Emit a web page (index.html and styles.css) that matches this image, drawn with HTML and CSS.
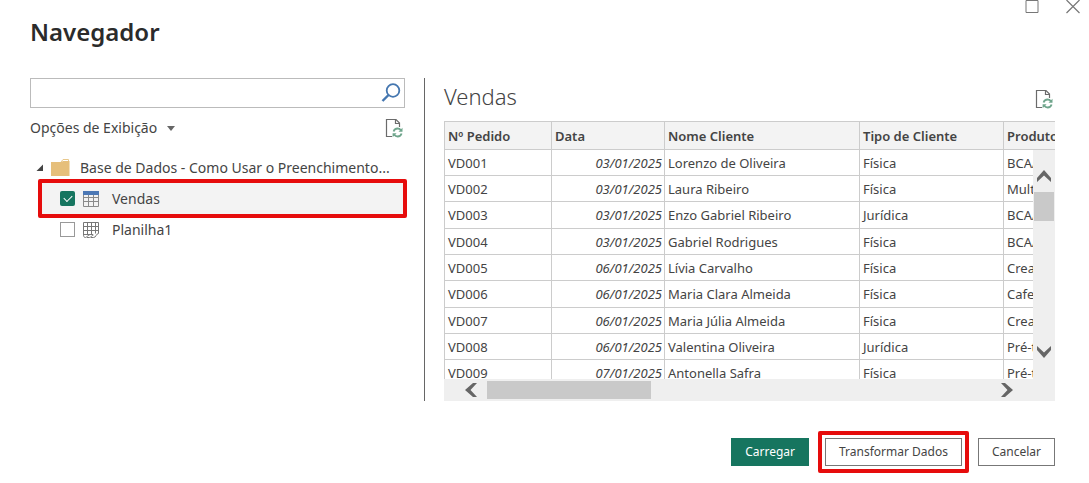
FILE: index.html
```
<!DOCTYPE html>
<html lang="pt-BR">
<head>
    <meta charset="UTF-8">
    <meta name="viewport" content="width=device-width, initial-scale=1.0">
    <title>Navegador</title>
    <link rel="stylesheet" href="styles.css">
</head>
<body>
    <!-- Shared icons -->
    <svg class="sprite" aria-hidden="true">
        <symbol id="icon-refresh" viewBox="0 0 18 20">
            <path d="M7 18.500H1.500V1.500H11L14.500 5v4" fill="none" stroke="#6b6b6b" stroke-width="1.200"/>
            <path d="M10.500 1.500V5.500h4" fill="none" stroke="#6b6b6b" stroke-width="1.200"/>
            <path d="M8.600 13.500c.6-2 2.200-3 4-3 1.500 0 2.600.7 3.300 1.700M16.600 15.500c-.6 2-2.200 3-4 3-1.500 0-2.600-.7-3.300-1.700" fill="none" stroke="#6fa58c" stroke-width="1.800"/>
            <path d="M17.500 9.800v4h-4zM7.600 19.200v-4h4z" fill="#6fa58c"/>
        </symbol>
    </svg>

    <main class="dialog">
        <!-- Window buttons -->
        <div class="titlebar">
            <button class="window-button" type="button" aria-label="Maximizar">
                <svg width="14" height="14" viewBox="0 0 14 14"><path d="M1 .5h12v12H1z" fill="none" stroke="#777"/></svg>
            </button>
            <button class="window-button" type="button" aria-label="Fechar">
                <svg width="14" height="14" viewBox="0 0 14 14"><path d="M.5 0l13 13M13.500 0l-13 13" fill="none" stroke="#777" stroke-width="1.200"/></svg>
            </button>
        </div>

        <h1 class="title">Navegador</h1>

        <div class="content">
            <!-- Source tree -->
            <section class="sources">
                <div class="search">
                    <input type="text" aria-label="Pesquisar">
                    <button type="button" aria-label="Buscar">
                        <svg width="20" height="20" viewBox="0 0 20 20"><circle cx="12" cy="7.500" r="6.300" fill="none" stroke="#4577b0" stroke-width="1.800"/><path d="M7.500 12L1.500 18" stroke="#4577b0" stroke-width="2.400"/></svg>
                    </button>
                </div>
                <div class="options">
                    <button class="options-button" type="button">Opções de Exibição <span class="caret"></span></button>
                    <button class="refresh" type="button" aria-label="Atualizar"><svg width="18" height="20"><use href="#icon-refresh"/></svg></button>
                </div>
                <ul class="tree">
                    <li class="folder">
                        <svg class="expander" width="8" height="8" viewBox="0 0 8 8"><path d="M7 .5V7H.5z" fill="#444"/></svg>
                        <svg class="icon" width="19" height="18" viewBox="0 0 19 18"><path d="M10 3l2-2.500h5.500V3" fill="#fff" stroke="#e8c88c"/><path d="M0 3h10.500l1.500-1h6.500v15H0z" fill="#e6bf7b"/></svg>
                        <span class="folder-name">Base de Dados - Como Usar o Preenchimento...</span>
                    </li>
                    <li class="item selected highlight">
                        <input type="checkbox" id="vendas" checked>
                        <svg class="icon" width="18" height="16" viewBox="0 0 18 16"><path d="M1.500 1v14.500h15V1M1.500 6.500h15M1.500 10.500h15M6.500 4v11.500M11.500 4v11.500" fill="none" stroke="#8a8a8a"/><path d="M1 0h16v4H1z" fill="#4c78b5"/></svg>
                        <label for="vendas">Vendas</label>
                    </li>
                    <li class="item">
                        <input type="checkbox" id="planilha1">
                        <svg class="icon" width="18" height="16" viewBox="0 0 18 16"><path d="M1.500 12.500V.5h15v11M1 4.500h16M1 8.500h16M1 12.500h10M5.500.5v12M9.500.5v12M13.500.5v11" fill="none" stroke="#777"/><path d="M1.500 12.500c0 2 .5 3 2 3 2 0 1.500-2.500 4-2.500M5 15.500h2.500c2 0 2-2.500 4-2.500M9 15.500h2.500c3 0 2-3.500 5-4" fill="none" stroke="#777"/></svg>
                        <label for="planilha1">Planilha1</label>
                    </li>
                </ul>
            </section>

            <!-- Table preview -->
            <section class="preview">
                <div class="preview-head">
                    <h2>Vendas</h2>
                    <button class="refresh" type="button" aria-label="Atualizar visualização"><svg width="18" height="20"><use href="#icon-refresh"/></svg></button>
                </div>
                <div class="grid">
                    <div class="grid-view">
                        <table>
                            <colgroup>
                                <col class="col-order"><col class="col-date"><col class="col-name"><col class="col-type"><col class="col-product">
                            </colgroup>
                            <thead>
                                <tr><th>Nº Pedido</th><th>Data</th><th>Nome Cliente</th><th>Tipo de Cliente</th><th>Produto</th></tr>
                            </thead>
                            <tbody>
                                <tr><td>VD001</td><td class="date">03/01/2025</td><td>Lorenzo de Oliveira</td><td>Física</td><td>BCAA</td></tr>
                                <tr><td>VD002</td><td class="date">03/01/2025</td><td>Laura Ribeiro</td><td>Física</td><td>Multi</td></tr>
                                <tr><td>VD003</td><td class="date">03/01/2025</td><td>Enzo Gabriel Ribeiro</td><td>Jurídica</td><td>BCAA</td></tr>
                                <tr><td>VD004</td><td class="date">03/01/2025</td><td>Gabriel Rodrigues</td><td>Física</td><td>BCAA</td></tr>
                                <tr><td>VD005</td><td class="date">06/01/2025</td><td>Lívia Carvalho</td><td>Física</td><td>Crea</td></tr>
                                <tr><td>VD006</td><td class="date">06/01/2025</td><td>Maria Clara Almeida</td><td>Física</td><td>Cafe</td></tr>
                                <tr><td>VD007</td><td class="date">06/01/2025</td><td>Maria Júlia Almeida</td><td>Física</td><td>Crea</td></tr>
                                <tr><td>VD008</td><td class="date">06/01/2025</td><td>Valentina Oliveira</td><td>Jurídica</td><td>Pré-t</td></tr>
                                <tr><td>VD009</td><td class="date">07/01/2025</td><td>Antonella Safra</td><td>Física</td><td>Pré-t</td></tr>
                            </tbody>
                        </table>
                        <div class="scroll-vertical">
                            <svg width="16" height="12" viewBox="0 0 16 12"><path d="M8 0l7 8v4L8 5.500 1 12V8z" fill="#666"/></svg>
                            <div class="track"><div class="thumb"></div></div>
                            <svg width="16" height="12" viewBox="0 0 16 12"><path d="M8 12l7-8V0L8 6.500 1 0v4z" fill="#666"/></svg>
                        </div>
                    </div>
                    <div class="scroll-horizontal">
                        <svg width="12" height="16" viewBox="0 0 12 16"><path d="M0 8l8-7h4L5.500 8l6.500 7H8z" fill="#666"/></svg>
                        <div class="track"><div class="thumb"></div></div>
                        <svg width="12" height="16" viewBox="0 0 12 16"><path d="M12 8L4 1H0l6.500 7L0 15h4z" fill="#666"/></svg>
                    </div>
                </div>
            </section>
        </div>

        <div class="actions">
            <button class="button primary" type="button">Carregar</button>
            <button class="button highlight" type="button">Transformar Dados</button>
            <button class="button" type="button">Cancelar</button>
        </div>
    </main>
</body>
</html>
```
FILE: styles.css
```
* {
    margin: 0;
    padding: 0;
    box-sizing: border-box;
}

body {
    background: #fff;
    color: #444;
    font-family: "Noto Sans", "Open Sans", sans-serif;
    font-size: 14px;
    line-height: 20px;
}

button {
    background: none;
    border: none;
    color: inherit;
    font: inherit;
    cursor: pointer;
}

svg {
    display: block;
    flex: none;
}

.sprite {
    position: absolute;
    width: 0;
    height: 0;
}

.dialog {
    padding: 0 34px 16px 30px;
}

/* Window buttons */
.titlebar {
    display: flex;
    justify-content: flex-end;
    gap: 27px;
    margin-right: -25px;
}

.title {
    color: #2b2b2b;
    font-size: 24px;
    font-weight: 600;
    line-height: 36px;
}

.content {
    display: grid;
    grid-template-columns: 375px minmax(0, 1fr);
    gap: 19px;
    margin-top: 28px;
}

/* Left side */
.search {
    display: flex;
    height: 30px;
    border: 1px solid #bbb;
}

.search input {
    flex: 1;
    min-width: 0;
    padding: 0 8px;
    border: none;
    outline: none;
    font: inherit;
}

.search button {
    padding: 4px 3px;
}

.options {
    display: flex;
    justify-content: space-between;
    align-items: center;
    height: 40px;
}

.options-button {
    display: flex;
    align-items: center;
    gap: 10px;
}

.refresh {
    padding-right: 2px;
}

.caret {
    border: 4px solid transparent;
    border-top: 5px solid #666;
    border-bottom: none;
}

.tree {
    margin-top: 4px;
    list-style: none;
}

.tree li {
    display: flex;
    align-items: center;
    height: 31px;
}

.folder {
    padding-left: 6px;
}

.folder .icon {
    margin: 0 10px 0 7px;
}

.folder-name {
    white-space: nowrap;
}

.item {
    position: relative;
    margin: 0 2px 0 12px;
    padding-left: 18px;
}

.item .icon {
    margin: 0 12px 0 7px;
}

.selected {
    background: #f3f3f3;
}

.item input {
    appearance: none;
    width: 15px;
    height: 15px;
    border: 1px solid #999;
}

.item input:checked {
    border: none;
    border-radius: 2px;
    background: #16755f;
}

.item input:checked::after {
    content: "";
    display: block;
    width: 7px;
    height: 4px;
    margin: 4px;
    border-left: 1px solid #fff;
    border-bottom: 1px solid #fff;
    transform: rotate(-45deg);
}

/* Red frame around the important steps */
.highlight {
    position: relative;
}

.highlight::after {
    content: "";
    position: absolute;
    inset: -4px;
    border: 4px solid #e60c0c;
    border-radius: 2px;
    pointer-events: none;
}

/* Right side */
.preview {
    padding-left: 19px;
    border-left: 1px solid #666;
}

.preview-head {
    display: flex;
    justify-content: space-between;
    align-items: flex-start;
    height: 43px;
}

.preview-head h2 {
    font-size: 22px;
    font-weight: 300;
    line-height: 36px;
}

.preview-head .refresh {
    padding-top: 11px;
}

.grid-view {
    position: relative;
    height: 258px;
    overflow: hidden;
}

table {
    width: 709px;
    border-collapse: collapse;
    table-layout: fixed;
    font-size: 13px;
    line-height: 18px;
}

.col-order {
    width: 107px;
}

.col-date {
    width: 113px;
}

.col-name {
    width: 195px;
}

.col-type {
    width: 144px;
}

th,
td {
    height: 26px;
    padding: 0 3px;
    border: 1px solid #ccc;
    text-align: left;
    white-space: nowrap;
}

th {
    height: 28px;
    background: #f3f3f3;
    font-weight: 600;
}

tr:nth-child(3n) td {
    height: 27px;
}

.date {
    padding-right: 2px;
    font-style: italic;
    text-align: right;
}

.scroll-vertical {
    position: absolute;
    top: 29px;
    right: 0;
    bottom: 0;
    display: flex;
    flex-direction: column;
    align-items: center;
    width: 22px;
    padding: 20px 0 21px;
    background: #efefef;
}

.scroll-vertical .track {
    flex: 1;
    padding-top: 10px;
}

.scroll-vertical .thumb {
    width: 20px;
    height: 29px;
    background: #c9c9c9;
}

.scroll-horizontal {
    display: flex;
    align-items: center;
    height: 22px;
    padding: 0 42px 0 21px;
    background: #efefef;
}

.scroll-horizontal .track {
    flex: 1;
    padding-left: 10px;
}

.scroll-horizontal .thumb {
    width: 164px;
    height: 18px;
    background: #c9c9c9;
}

/* Footer */
.actions {
    display: flex;
    justify-content: flex-end;
    gap: 16px;
    margin-top: 37px;
}

.button {
    height: 28px;
    padding: 0 13px;
    border: 1px solid #777;
    font-size: 12px;
}

.primary {
    border-color: #16755f;
    background: #16755f;
    color: #fff;
}

.button.highlight::after {
    inset: -8px;
}
```
